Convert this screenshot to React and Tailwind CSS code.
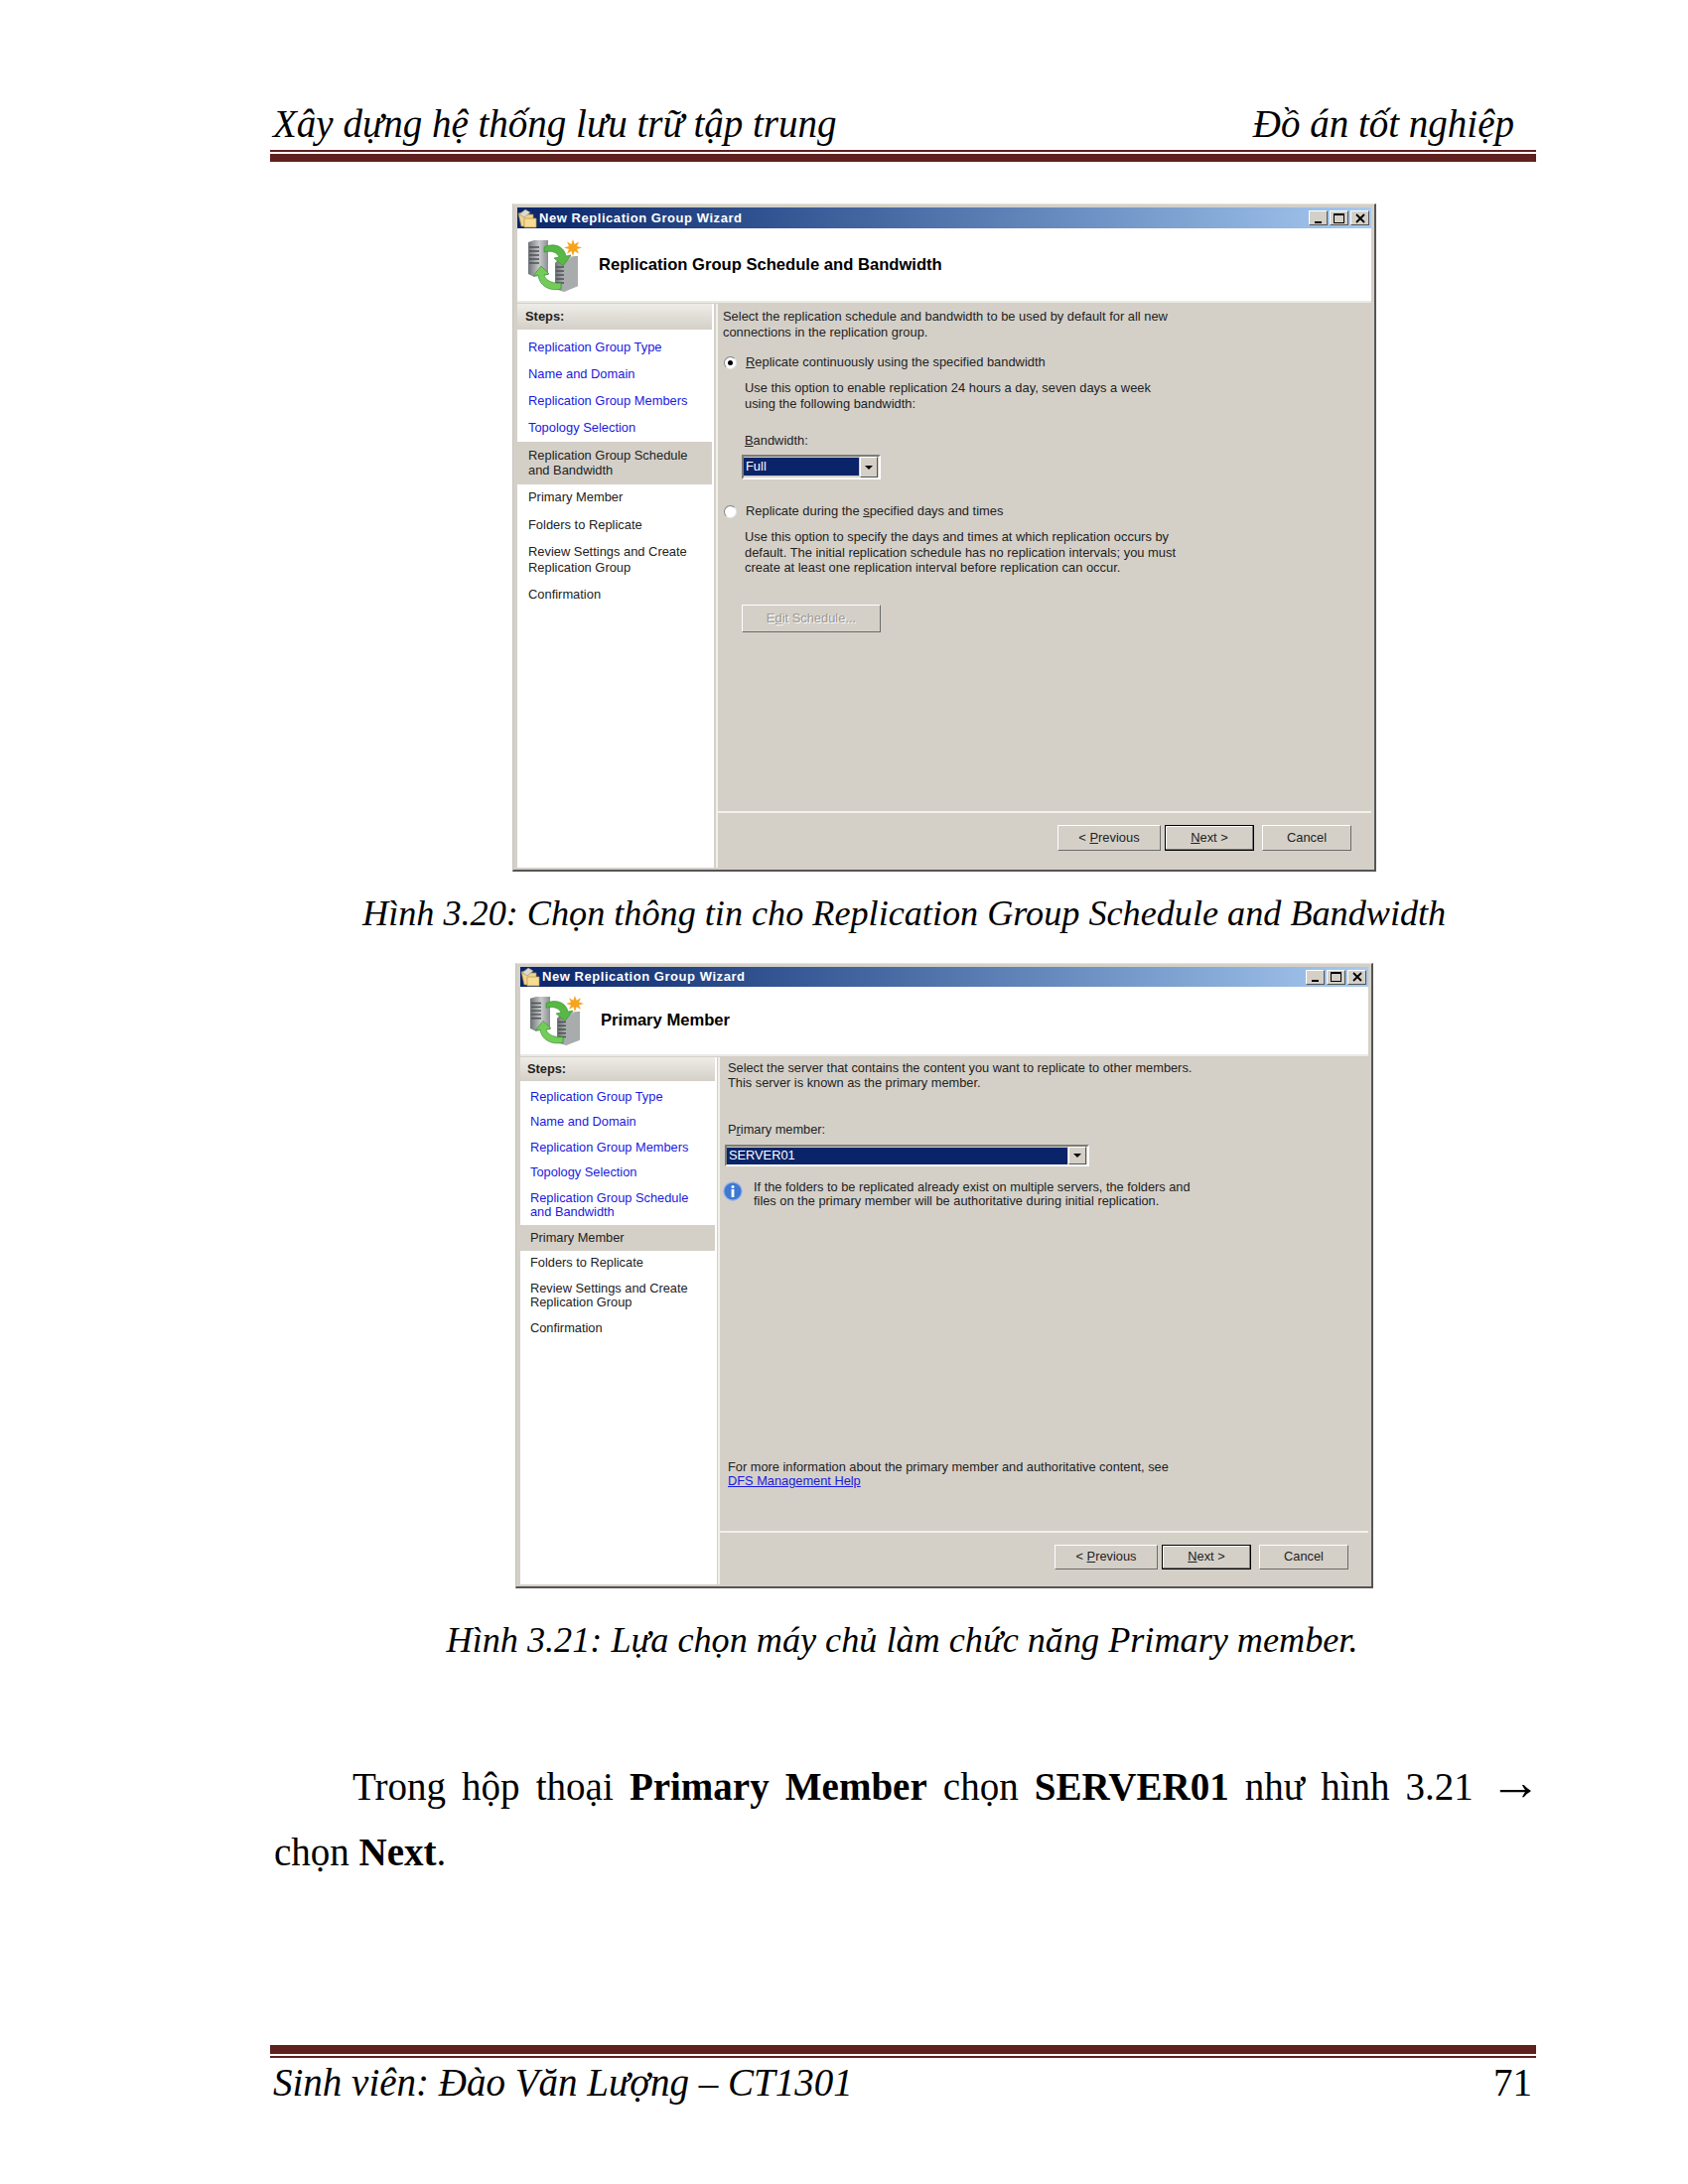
import React from 'react';

const UI_FONT = "font-['Liberation_Sans',Arial,sans-serif]";

const WizardIcon = ({ className }) => (
  <svg viewBox="0 0 54 54" className={className} preserveAspectRatio="none">
    <defs>
      <linearGradient id="tower" x1="0" x2="1" y1="0" y2="0">
        <stop offset="0" stopColor="#6f7376" />
        <stop offset="0.55" stopColor="#c9cbcc" />
        <stop offset="1" stopColor="#8b8e90" />
      </linearGradient>
    </defs>
    <polygon points="0,3 6,1 20,1 20,36 6,38 0,35" fill="url(#tower)" />
    <path d="M1 8h10M1 12h10M1 16h10M1 20h10M1 24h10" stroke="#4e5254" strokeWidth="1.5" />
    <polygon points="27,24 33,18 50,17 50,47 36,53 27,50" fill="url(#tower)" />
    <polygon points="36,22 50,17 50,47 36,53" fill="#a9acad" />
    <path d="M28 28h8M28 32h8M28 36h8M28 40h8M28 44h8" stroke="#4e5254" strokeWidth="1.5" />
    <path d="M16 8 C26 3 36 7 38 17 L43 16 L35 27 L26 19 L31 18 C29 13 23 11 16 13 Z" fill="#58b846" stroke="#2e8a2c" strokeWidth="0.6" />
    <path d="M33 50 C22 53 11 47 10 36 L5 37 L13 27 L21 35 L16 36 C17 41 24 45 33 44 Z" fill="#74cc58" stroke="#2e8a2c" strokeWidth="0.6" />
    <path d="M45 0 L46.6 5 L51 2.4 L49 7 L54 8.5 L49 10 L51 14.6 L46.6 12 L45 17 L43.4 12 L39 14.6 L41 10 L36 8.5 L41 7 L39 2.4 L43.4 5 Z" fill="#f6a41e" />
  </svg>
);

const FolderIcon = () => (
  <svg viewBox="0 0 20 20" className="w-5 h-5 shrink-0 mr-[2px]">
    <path d="M1 5 L8 3 L10 6 L16 6 L16 18 L4 18 Z" fill="#f0d48c" stroke="#a88a46" strokeWidth="0.7" />
    <path d="M2 6 L8 1 L13 4 L7 9 Z" fill="#dcd9cc" stroke="#8c8c80" strokeWidth="0.6" />
    <path d="M7 10 L19 10 L19 19 L7 19 Z" fill="#f7dc93" stroke="#b6954d" strokeWidth="0.7" />
  </svg>
);

const InfoIcon = () => (
  <svg viewBox="0 0 20 20" className="w-5 h-5 shrink-0">
    <circle cx="10" cy="10" r="9.2" fill="#3f78d2" stroke="#9db8e4" strokeWidth="1.2" />
    <circle cx="10" cy="5.4" r="1.5" fill="#fff" />
    <rect x="8.6" y="8" width="2.8" height="8" fill="#fff" />
  </svg>
);

const WinBtn = ({ children }) => (
  <div className="w-[19px] h-[15px] bg-[#d4d0c8] border border-t-white border-l-white border-r-[#555] border-b-[#555] flex items-center justify-center">
    {children}
  </div>
);

const WinControls = () => (
  <div className="ml-auto flex gap-[2px] mr-[2px]">
    <WinBtn><div className="w-[7px] h-[2px] bg-black mt-[8px]" /></WinBtn>
    <WinBtn><div className="w-[11px] h-[10px] border border-black border-t-2" /></WinBtn>
    <WinBtn>
      <svg viewBox="0 0 10 10" className="w-[10px] h-[10px]">
        <path d="M1 1 L9 9 M9 1 L1 9" stroke="#000" strokeWidth="1.8" />
      </svg>
    </WinBtn>
  </div>
);

const Radio = ({ checked }) => (
  <div className="w-[13px] h-[13px] rounded-full bg-white border border-t-[#808080] border-l-[#808080] border-r-[#e8e6e0] border-b-[#e8e6e0] flex items-center justify-center shrink-0">
    {checked && <div className="w-[5px] h-[5px] rounded-full bg-black" />}
  </div>
);

const Combo = ({ value, outer, inner }) => (
  <div className={`${outer} flex border-2 border-t-[#7c7c78] border-l-[#7c7c78] border-r-white border-b-white bg-[#d4d0c8] pr-[1px]`}>
    <div className={`${inner} bg-[#0a246a] text-white pl-[2px] mt-[1px] flex items-center`}>{value}</div>
    <div className="flex-1 ml-[1px] bg-[#d4d0c8] border border-t-white border-l-white border-r-[#555] border-b-[#555] flex items-center justify-center">
      <div className="w-0 h-0 border-x-[4px] border-x-transparent border-t-[4px] border-t-black" />
    </div>
  </div>
);

const PushButton = ({ children, primary, className }) => (
  <div
    className={`${className} flex items-center justify-center border ${
      primary
        ? 'border-black shadow-[inset_-1px_-1px_0_#777,inset_1px_1px_0_#fff]'
        : 'border-t-white border-l-white border-r-[#6b6b68] border-b-[#6b6b68]'
    } text-[#222]`}
  >
    <span>{children}</span>
  </div>
);

const Footer = ({ size, h }) => (
  <div className={`${h} shrink-0 border-t-2 border-t-[#f2f0ea] flex justify-end items-start pt-[12px] pr-[20px]`}>
    <PushButton className={`${size} w-[104px] mr-[4px]`}>{'< '}<u>P</u>revious</PushButton>
    <PushButton primary className={`${size} w-[90px] mr-[8px]`}><u>N</u>ext {'>'}</PushButton>
    <PushButton className={`${size} w-[90px]`}>Cancel</PushButton>
  </div>
);

const Steps = ({ items, active, itemClass, headClass, listClass }) => (
  <div className="w-[198px] shrink-0 bg-white text-[#222]">
    <div className={`${headClass} bg-gradient-to-b from-[#eeece7] to-[#d4d0c8] font-bold flex items-center mr-[2px]`}>Steps:</div>
    <div className={listClass}>
      {items.map((item, i) => (
        <div
          key={item}
          className={`${itemClass} mr-[2px] whitespace-pre-line ${
            i === active ? 'bg-[#d4d0c8] text-[#222]' : i < active ? 'text-[#1a1ae0]' : 'text-[#222]'
          }`}
        >
          {item}
        </div>
      ))}
    </div>
  </div>
);

const stepItems = [
  'Replication Group Type',
  'Name and Domain',
  'Replication Group Members',
  'Topology Selection',
  'Replication Group Schedule\nand Bandwidth',
  'Primary Member',
  'Folders to Replicate',
  'Review Settings and Create\nReplication Group',
  'Confirmation',
];

const Wizard = ({ frame, titleH, headerH, iconClass, iconPad, title, children }) => (
  <div className={`${frame} ${UI_FONT} bg-[#d4d0c8] border border-t-[#e4e2dc] border-l-[#c4c2bc] border-r-2 border-b-2 border-r-[#555] border-b-[#555] pt-[3px] pl-[4px] pr-[3px] pb-[2px] flex flex-col`}>
    <div className={`${titleH} shrink-0 bg-gradient-to-r from-[#0a246a] to-[#a6caf0] flex items-center text-white font-bold text-[13px] tracking-[0.55px]`}>
      <FolderIcon />
      New Replication Group Wizard
      <WinControls />
    </div>
    <div className={`${headerH} shrink-0 bg-white border-b-2 border-b-[#ebe9e4] flex items-center text-[16.6px] font-bold text-black ${iconPad}`}>
      <WizardIcon className={iconClass} />
      <span className="ml-[17px]">{title}</span>
    </div>
    <div className="flex-1 min-h-0 flex mt-[1px]">{children}</div>
  </div>
);

const Caption = ({ children, className }) => (
  <div className={`${className} text-center italic text-[36.2px] leading-[44px] text-black`}>{children}</div>
);

export default function App() {
  return (
    <div className="w-[1700px] h-[2200px] bg-white font-['Liberation_Serif','Times_New_Roman',serif] overflow-hidden">
      <div className="ml-[272px] w-[1275px] pt-[101px]">
        <div className="flex justify-between items-end italic text-[39px] leading-[48px] pl-[3px] pr-[22px] text-black">
          <span>Xây dựng hệ thống lưu trữ tập trung</span>
          <span>Đồ án tốt nghiệp</span>
        </div>
        <div className="h-[2px] bg-[#5f2120] mt-[2px]" />
        <div className="h-[8px] bg-[#5f2120] mt-[2px]" />
      </div>

      <div className="ml-[516px] mt-[42px]">
        <Wizard
          frame="w-[870px] h-[673px] text-[12.9px]"
          titleH="h-[21px]"
          headerH="h-[75px]"
          iconClass="w-[54px] h-[54px] shrink-0"
          iconPad="pl-[11px] pt-[2px]"
          title="Replication Group Schedule and Bandwidth"
        >
          <Steps
            items={stepItems}
            active={4}
            headClass="h-[26px] pl-[8px]"
            listClass="pt-[4px]"
            itemClass="leading-[15.7px] py-[5.75px] pl-[11px]"
          />
          <div className="flex-1 border-l-2 border-l-[#f2f0ea] ml-[2px] flex flex-col text-[#222] leading-[16px]">
            <div className="flex-1 pl-[5px] pt-[5px]">
              <p>Select the replication schedule and bandwidth to be used by default for all new<br />connections in the replication group.</p>
              <div className="flex items-center mt-[14px] ml-[1px]">
                <Radio checked />
                <span className="ml-[9px]"><u>R</u>eplicate continuously using the specified bandwidth</span>
              </div>
              <p className="mt-[10px] ml-[22px]">Use this option to enable replication 24 hours a day, seven days a week<br />using the following bandwidth:</p>
              <p className="mt-[21px] ml-[22px]"><u>B</u>andwidth:</p>
              <Combo value="Full" outer="mt-[6px] ml-[19px] w-[140px] h-[25px]" inner="w-[116px] h-[18px]" />
              <div className="flex items-center mt-[24px] ml-[1px]">
                <Radio />
                <span className="ml-[9px]">Replicate during the <u>s</u>pecified days and times</span>
              </div>
              <p className="mt-[10px] ml-[22px] leading-[15.6px]">Use this option to specify the days and times at which replication occurs by<br />default. The initial replication schedule has no replication intervals; you must<br />create at least one replication interval before replication can occur.</p>
              <PushButton className="mt-[29px] ml-[19px] w-[140px] h-[28px] !text-[#9a9894] [text-shadow:1px_1px_0_#fff]">E<u>d</u>it Schedule...</PushButton>
            </div>
            <Footer size="h-[26px]" h="h-[57px]" />
          </div>
        </Wizard>
      </div>

      <Caption className="mt-[20px] ml-[365px] w-[1088px] whitespace-nowrap">Hình 3.20: Chọn thông tin cho Replication Group Schedule and Bandwidth</Caption>

      <div className="ml-[519px] mt-[28px]">
        <Wizard
          frame="w-[864px] h-[630px] text-[12.8px]"
          titleH="h-[20px]"
          headerH="h-[70px]"
          iconClass="w-[54px] h-[51px] shrink-0"
          iconPad="pl-[10px]"
          title="Primary Member"
        >
          <Steps
            items={stepItems}
            active={5}
            headClass="h-[24px] pl-[7px]"
            listClass="pt-[3px]"
            itemClass="leading-[14.5px] py-[5.5px] pl-[10px]"
          />
          <div className="flex-1 border-l-2 border-l-[#f2f0ea] ml-[1px] flex flex-col text-[#222] leading-[14.5px]">
            <div className="flex-1 pl-[8px] pt-[4px]">
              <p>Select the server that contains the content you want to replicate to other members.<br />This server is known as the primary member.</p>
              <p className="mt-[33px]">P<u>r</u>imary member:</p>
              <Combo value="SERVER01" outer="mt-[7px] -ml-[3px] w-[367px] h-[22px]" inner="w-[343px] h-[17px]" />
              <div className="flex mt-[15px] -ml-[5px]">
                <InfoIcon />
                <p className="ml-[11px] -mt-[1px]">If the folders to be replicated already exist on multiple servers, the folders and<br />files on the primary member will be authoritative during initial replication.</p>
              </div>
              <p className="mt-[253px]">For more information about the primary member and authoritative content, see<br /><a className="text-[#1a1ae0] underline">DFS Management Help</a></p>
            </div>
            <Footer size="h-[25px]" h="h-[54px]" />
          </div>
        </Wizard>
      </div>

      <Caption className="mt-[30px] ml-[449px] w-[919px] whitespace-nowrap">Hình 3.21: Lựa chọn máy chủ làm chức năng Primary member.</Caption>

      <p className="ml-[276px] w-[1276px] mt-[93px] text-[39px] leading-[66px] text-black text-justify indent-[79px]">
        Trong hộp thoại <b>Primary Member</b> chọn <b>SERVER01</b> như hình 3.21 <span className="font-['Liberation_Sans',sans-serif] text-[52px] leading-none">→</span> chọn <b>Next</b>.
      </p>

      <div className="absolute top-[2060px] left-[272px] w-[1275px]">
        <div className="h-[9px] bg-[#5f2120]" />
        <div className="h-[2px] bg-[#5f2120] mt-[2px]" />
        <div className="flex justify-between italic text-[39px] leading-[48px] mt-[1px] pl-[3px] pr-[4px] text-black">
          <span>Sinh viên: Đào Văn Lượng – CT1301</span>
          <span className="not-italic">71</span>
        </div>
      </div>
    </div>
  );
}
